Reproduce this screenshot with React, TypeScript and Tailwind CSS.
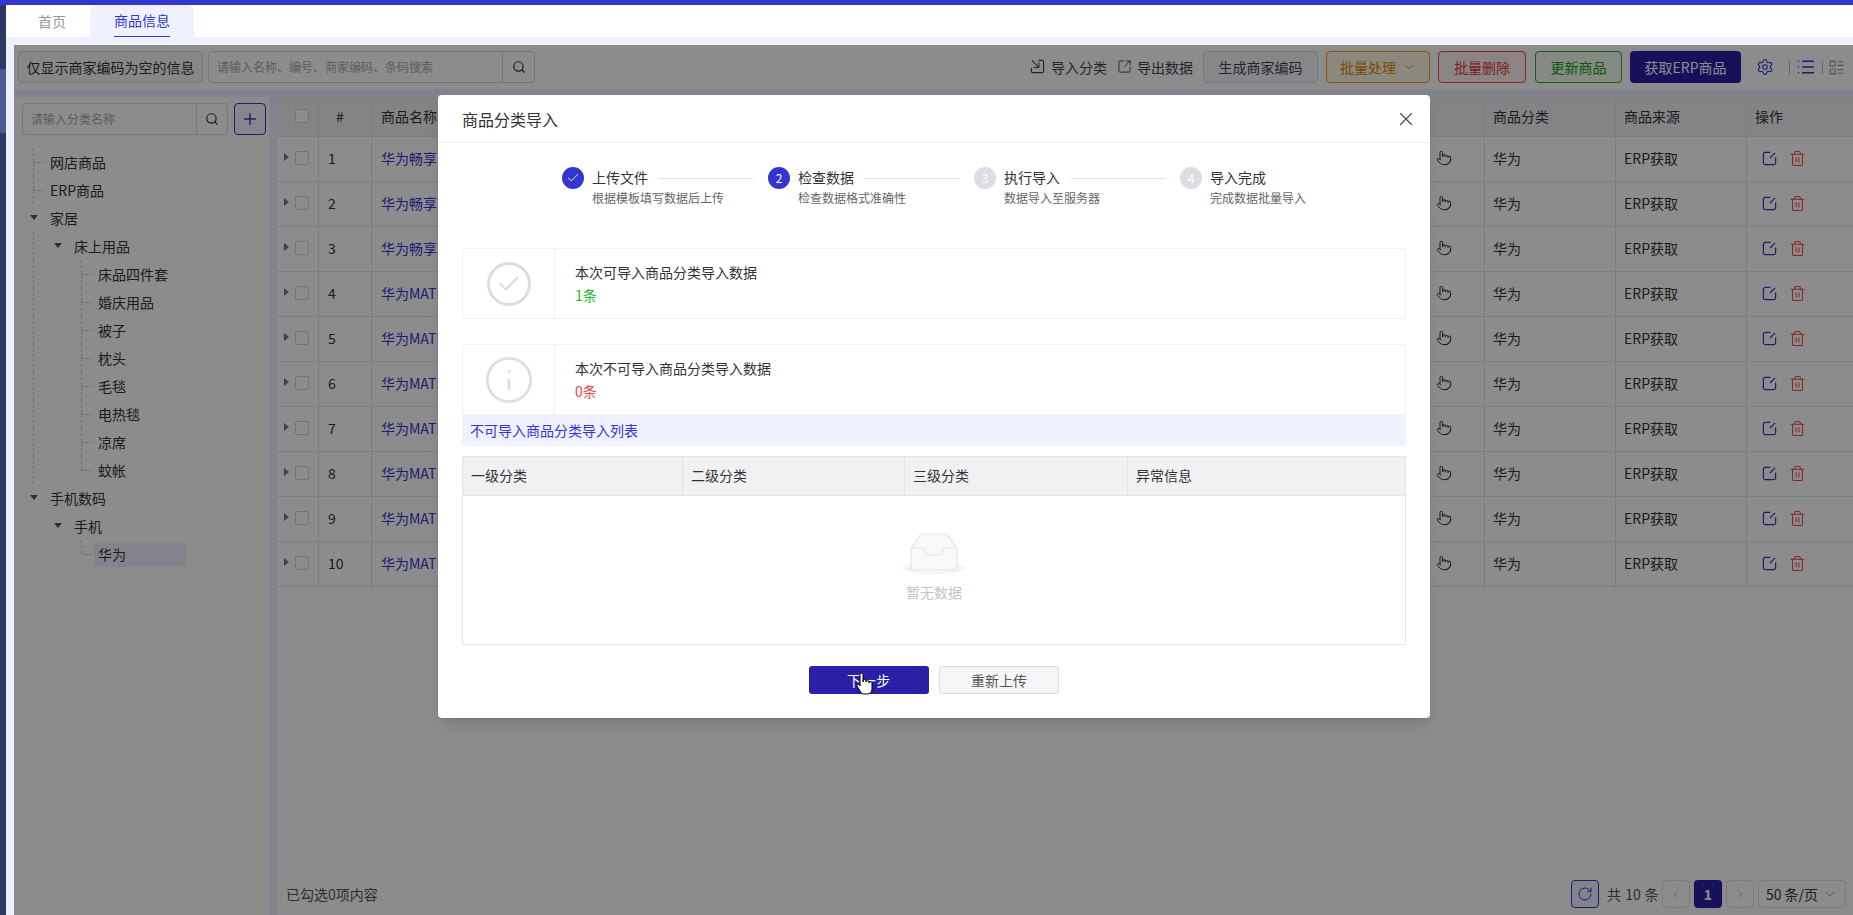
import { Check, ChevronDown, ChevronLeft, ChevronRight, Info, List, LayoutList, Plus, Pointer, RotateCw, Search, Settings, SquareArrowOutUpRight, Trash2, X } from "lucide-react";

const font = { fontFamily: '"Noto Sans CJK SC", "Noto Sans", sans-serif' };

const tree = [
  { label: "网店商品", level: 0, line: "first" },
  { label: "ERP商品", level: 0, line: "first" },
  { label: "家居", level: 0, caret: true },
  { label: "床上用品", level: 1, caret: true },
  { label: "床品四件套", level: 2 },
  { label: "婚庆用品", level: 2 },
  { label: "被子", level: 2 },
  { label: "枕头", level: 2 },
  { label: "毛毯", level: 2 },
  { label: "电热毯", level: 2 },
  { label: "凉席", level: 2 },
  { label: "蚊帐", level: 2, last: true },
  { label: "手机数码", level: 0, caret: true },
  { label: "手机", level: 1, caret: true },
  { label: "华为", level: 2, last: true, active: true },
];

const rows = [
  "华为畅享10 Plus 全网通",
  "华为畅享20 Pro 全网通",
  "华为畅享20 SE 全网通",
  "华为MATE 30 Pro 5G",
  "华为MATE 40 Pro 5G",
  "华为MATE 40 RS 5G",
  "华为MATE 20 X 5G",
  "华为MATE 30 RS 5G",
  "华为MATE 40E 5G",
  "华为MATE X2 5G",
];

const tableCols = "grid grid-cols-[42px_53px_1fr_55px_131px_131px_106px]";
const cell = "border-r border-b border-[#e4e5e8] flex items-center pb-[2px]";

function Checkbox() {
  return <span className="w-[14px] h-[14px] rounded-[2px] border border-[#d5d6da] bg-white" />;
}

function TreeRow({ item }: { item: (typeof tree)[number] }) {
  const textLeft = item.level === 0 ? "pl-[36px]" : item.level === 1 ? "pl-[60px]" : "pl-[84px]";
  return (
    <div className={`relative h-[28px] flex items-center text-sm text-[#333] ${textLeft}`}>
      {item.caret && (
        <span
          className={`absolute top-[11px] w-0 h-0 border-x-[4px] border-x-transparent border-t-[5px] border-t-[#555] ${
            item.level === 0 ? "left-[16px]" : "left-[40px]"
          }`}
        />
      )}
      {item.line === "first" && (
        <>
          <span className="absolute left-[19px] top-0 h-[28px] border-l border-dashed border-[#d0d0d0]" />
          <span className="absolute left-[19px] top-[14px] w-[11px] border-t border-dashed border-[#d0d0d0]" />
        </>
      )}
      {item.level >= 1 && item.label !== "手机" && item.label !== "华为" && (
        <span className="absolute left-[19px] top-0 h-[28px] border-l border-dashed border-[#d0d0d0]" />
      )}
      {item.level === 2 && (
        <>
          <span className={`absolute left-[67px] top-0 border-l border-dashed border-[#d0d0d0] ${item.last ? "h-[14px]" : "h-[28px]"}`} />
          <span className="absolute left-[67px] top-[14px] w-[11px] border-t border-dashed border-[#d0d0d0]" />
        </>
      )}
      {item.active && <span className="absolute left-[80px] top-[3px] w-[92px] h-[24px] rounded-[2px] bg-[#eff1fe]" />}
      <span className="relative pb-[1px]">{item.label}</span>
    </div>
  );
}

function Step({ n, title, sub, state, last }: { n: number; title: string; sub: string; state: "done" | "active" | "todo"; last?: boolean }) {
  return (
    <div className="w-[206px] flex gap-[8px] shrink-0">
      <span
        className={`w-[22px] h-[22px] shrink-0 rounded-full flex items-center justify-center text-xs text-white ${
          state === "todo" ? "bg-[#dcdde3]" : "bg-[#3535d0]"
        }`}
      >
        {state === "done" ? <Check size={14} strokeWidth={1.5} /> : n}
      </span>
      <div className="flex-1 min-w-0">
        <div className="flex items-center h-[22px] gap-[10px]">
          <span className="text-sm text-[#333] whitespace-nowrap pb-[2px]">{title}</span>
          {!last && <span className="w-[96px] border-t border-[#e4e5e8]" />}
        </div>
        <div className="text-xs leading-[16px] mt-[1px] text-[#666] whitespace-nowrap">{sub}</div>
      </div>
    </div>
  );
}

function ResultCard({ icon, title, value, valueColor }: { icon: React.ReactNode; title: string; value: string; valueColor: string }) {
  return (
    <div className="h-[71px] border border-[#f1f1f4] rounded-[2px] flex">
      <div className="w-[92px] border-r border-[#f1f1f4] flex items-center justify-center text-[#dcdde3]">{icon}</div>
      <div className="pl-[20px] pb-[1px] flex flex-col justify-center gap-[3px] text-sm leading-[20px]">
        <div className="text-[#333]">{title}</div>
        <div className={valueColor}>{value}</div>
      </div>
    </div>
  );
}

function Modal() {
  return (
    <div className="absolute left-[424px] top-[50px] w-[992px] h-[623px] bg-white rounded-[4px] shadow-lg flex flex-col">
      <div className="h-[48px] shrink-0 border-b border-[#eeeef0] flex items-center justify-between pl-[24px] pr-[13px]">
        <span className="text-base text-[#333]">商品分类导入</span>
        <X size={22} strokeWidth={1.25} className="text-[#444]" />
      </div>
      <div className="flex pl-[124px] pt-[24px] h-[105px] shrink-0">
        <Step n={1} state="done" title="上传文件" sub="根据模板填写数据后上传" />
        <Step n={2} state="active" title="检查数据" sub="检查数据格式准确性" />
        <Step n={3} state="todo" title="执行导入" sub="数据导入至服务器" />
        <Step n={4} state="todo" last title="导入完成" sub="完成数据批量导入" />
      </div>
      <div className="px-[24px] flex flex-col">
        <ResultCard
          icon={
            <span className="w-[44px] h-[44px] rounded-full border-[3px] border-[#dcdde3] flex items-center justify-center">
              <Check size={26} strokeWidth={2} />
            </span>
          }
          title="本次可导入商品分类导入数据"
          value="1条"
          valueColor="text-[#1fb41f]"
        />
        <div className="h-[25px]" />
        <ResultCard icon={<Info size={52} strokeWidth={1.25} />} title="本次不可导入商品分类导入数据" value="0条" valueColor="text-[#f5403c]" />
        <div className="h-[31px] bg-[#eff1fe] text-sm text-[#3535d0] flex items-center pl-[8px] pb-[2px]">不可导入商品分类导入列表</div>
        <div className="mt-[10px] border border-[#e6e6ea] h-[189px] flex flex-col">
          <div className="h-[39px] shrink-0 bg-[#f1f1f4] border-b border-[#e6e6ea] grid grid-cols-[220px_222px_223px_1fr] text-sm text-[#333]">
            {["一级分类", "二级分类", "三级分类", "异常信息"].map((h, i) => (
              <div key={h} className={`flex items-center pl-[8px] pb-[2px] ${i < 3 ? "border-r border-[#e6e6ea]" : ""}`}>
                {h}
              </div>
            ))}
          </div>
          <div className="flex-1 flex flex-col items-center pt-[37px]">
            <svg width="64" height="42" viewBox="0 0 64 42" fill="none">
              <ellipse cx="32" cy="35" rx="31" ry="6.5" fill="#f5f5f5" />
              <path d="M9 15 L19 1 H45 L55 15 V34 Q55 37 52 37 H12 Q9 37 9 34 Z" fill="#f8f8f8" stroke="#e6e6e6" strokeWidth="1.2" />
              <path d="M9 15 H22 Q23 22 27 22 H37 Q41 22 42 15 H55" fill="none" stroke="#e6e6e6" strokeWidth="1.2" />
            </svg>
            <span className="text-sm text-[#c4c4c4] mt-[7px]">暂无数据</span>
          </div>
        </div>
      </div>
      <div className="flex justify-center gap-[10px] mt-[21px]">
        <div className="relative w-[120px] h-[28px] rounded-[3px] bg-[#2a20a8] text-white text-sm flex items-center justify-center tracking-[0.05em] pb-[1px]">
          下一步
          {/* mouse cursor caught in the shot */}
          <svg width="18" height="24" viewBox="0 0 18 24" className="absolute left-[47px] top-[6px]">
            <path
              d="M4 2.5a1.5 1.5 0 0 1 3 0V10V9a1.5 1.5 0 0 1 3 0v1a1.5 1.5 0 0 1 3 0v1a1.5 1.5 0 0 1 3 0v6c0 3-2 5-5 5H8c-2 0-3-1-4-3L1 14c-.8-1.4 1-2.8 2-1.5l1 1.5Z"
              fill="white"
              stroke="black"
              strokeWidth="1"
            />
          </svg>
        </div>
        <div className="w-[120px] h-[28px] rounded-[3px] bg-[#f6f6f9] border border-[#dcdde3] text-sm text-[#555] flex items-center justify-center pb-[1px]">重新上传</div>
      </div>
    </div>
  );
}

export default function App() {
  return (
    <div className="h-screen overflow-hidden flex flex-col bg-white" style={font}>
      <div className="h-[5px] shrink-0 bg-[#3535d0]" />
      <div className="flex-1 flex min-h-0">
        {/* Left nav strip */}
        <div className="w-[6px] shrink-0 bg-[#2f3763] flex flex-col pt-[64px]">
          <div className="h-[64px] bg-[#4d5a94]" />
        </div>

        <div className="flex-1 min-w-0 flex flex-col">
          {/* Tabs */}
          <div className="h-[32px] shrink-0 flex items-stretch text-sm">
            <div className="w-[84px] pl-[32px] flex items-center text-[#999]">首页</div>
            <div className="w-[104px] rounded-t-[8px] bg-[#eff1fe] flex justify-center">
              <span className="h-[32px] leading-[30px] border-b border-[#3535d0] text-[#3535d0]">商品信息</span>
            </div>
          </div>

          <div className="flex-1 min-h-0 bg-[#eff1fe] pl-[8px] pt-[8px] flex">
            <div className="relative flex-1 min-w-0 flex flex-col">
              {/* Toolbar */}
              <div className="h-[44px] shrink-0 bg-white flex items-center pl-[4px] pr-[8px] text-sm">
                <div className="h-[32px] w-[185px] border border-[#d8d9dd] rounded-[4px] bg-[#f6f6f9] text-[#333] flex items-center justify-center pb-[1px]">仅显示商家编码为空的信息</div>
                <div className="ml-[5px] h-[32px] w-[327px] border border-[#d8d9dd] rounded-[4px] flex items-center">
                  <span className="flex-1 pl-[8px] text-xs text-[#aaa]">请输入名称、编号、商家编码、条码搜索</span>
                  <span className="w-[32px] h-full border-l border-[#d8d9dd] flex items-center justify-center text-[#333]">
                    <Search size={14} strokeWidth={2} />
                  </span>
                </div>
                <div className="flex-1" />
                <span className="flex items-center gap-[6px] text-[#445] pb-[1px]">
                  <svg width="15" height="15" viewBox="0 0 16 16" fill="none" stroke="currentColor" strokeWidth="1.2">
                    <path d="M9 1.5h4a1.5 1.5 0 0 1 1.5 1.5v10a1.5 1.5 0 0 1-1.5 1.5H3A1.5 1.5 0 0 1 1.5 13v-3.5" />
                    <path d="M2 1.5l7 7M9.5 3.5v5.5H4" />
                  </svg>
                  导入分类
                </span>
                <span className="ml-[10px] flex items-center gap-[5px] text-[#445] pb-[1px]">
                  <SquareArrowOutUpRight size={15} strokeWidth={1.5} />
                  导出数据
                </span>
                <div className="ml-[10px] w-[115px] h-[32px] border border-[#d8d9dd] rounded-[4px] bg-[#f6f6f9] text-[#445] flex items-center justify-center pb-[1px]">生成商家编码</div>
                <div className="ml-[8px] w-[104px] h-[32px] border border-[#f59e0b] rounded-[4px] bg-[#fff7e6] text-[#e58a00] flex items-center justify-center gap-[6px] pb-[1px]">
                  批量处理 <ChevronDown size={14} strokeWidth={1.5} />
                </div>
                <div className="ml-[8px] w-[88px] h-[32px] border border-[#f04848] rounded-[4px] bg-[#fff1f0] text-[#e83838] flex items-center justify-center pb-[1px]">批量删除</div>
                <div className="ml-[9px] w-[87px] h-[32px] border border-[#22b022] rounded-[4px] bg-[#f0fbef] text-[#16a016] flex items-center justify-center pb-[1px]">更新商品</div>
                <div className="ml-[8px] w-[111px] h-[32px] rounded-[4px] bg-[#2a20a8] text-white flex items-center justify-center pb-[1px]">获取ERP商品</div>
                <Settings size={18} strokeWidth={1.5} className="ml-[15px] text-[#3535d0]" />
                <span className="ml-[15px] h-[13px] border-l border-[#bbb]" />
                <List size={20} strokeWidth={1.75} className="ml-[6px] text-[#3535d0]" />
                <span className="ml-[6px] h-[13px] border-l border-[#bbb]" />
                <LayoutList size={17} strokeWidth={1.5} className="ml-[5px] text-[#999]" />
              </div>

              {/* Body */}
              <div className="flex-1 min-h-0 mt-[8px] flex gap-[8px]">
                <div className="w-[255px] shrink-0 bg-white">
                  <div className="flex gap-[6px] pl-[8px] pt-[6px]">
                    <div className="w-[206px] h-[32px] border border-[#d8d9dd] rounded-[4px] flex items-center">
                      <span className="flex-1 pl-[8px] text-xs text-[#aaa]">请输入分类名称</span>
                      <span className="w-[31px] h-full border-l border-[#d8d9dd] flex items-center justify-center text-[#333]">
                        <Search size={14} strokeWidth={2} />
                      </span>
                    </div>
                    <div className="w-[32px] h-[32px] border border-[#3535d0] rounded-[4px] bg-[#f6f6fe] flex items-center justify-center text-[#3535d0]">
                      <Plus size={18} strokeWidth={2} />
                    </div>
                  </div>
                  <div className="mt-[13px]">
                    {tree.map((t) => (
                      <TreeRow key={t.label} item={t} />
                    ))}
                  </div>
                </div>

                <div className="flex-1 min-w-0 bg-white flex flex-col">
                  <div className={`${tableCols} text-sm text-[#333]`}>
                    <div className={`${cell} bg-[#f1f1f4] h-[40px] border-t pl-[18px]`}><Checkbox /></div>
                    <div className={`${cell} bg-[#f1f1f4] h-[40px] border-t pl-[17px]`}>#</div>
                    <div className={`${cell} bg-[#f1f1f4] h-[40px] border-t pl-[9px]`}>商品名称</div>
                    <div className={`${cell} bg-[#f1f1f4] h-[40px] border-t`} />
                    <div className={`${cell} bg-[#f1f1f4] h-[40px] border-t pl-[8px]`}>商品分类</div>
                    <div className={`${cell} bg-[#f1f1f4] h-[40px] border-t pl-[8px]`}>商品来源</div>
                    <div className={`${cell} bg-[#f1f1f4] h-[40px] border-t pl-[8px] border-r-0`}>操作</div>
                    {rows.map((name, i) => (
                      <div key={i} className="contents">
                        <div className={`${cell} h-[45px] relative pl-[18px]`}>
                          <span className="absolute left-[7px] top-[16px] w-0 h-0 border-y-[4px] border-y-transparent border-l-[5px] border-l-[#777]" />
                          <Checkbox />
                        </div>
                        <div className={`${cell} h-[45px] pl-[9px]`}>{i + 1}</div>
                        <div className={`${cell} h-[45px] pl-[9px] text-[#3535d0] whitespace-nowrap overflow-hidden`}>{name}</div>
                        <div className={`${cell} h-[45px] pl-[6px]`}>
                          <Pointer size={16} strokeWidth={1.5} />
                        </div>
                        <div className={`${cell} h-[45px] pl-[8px]`}>华为</div>
                        <div className={`${cell} h-[45px] pl-[8px]`}>ERP获取</div>
                        <div className={`${cell} h-[45px] pl-[15px] gap-[12px] border-r-0`}>
                          <svg width="15" height="15" viewBox="0 0 16 16" fill="none" stroke="currentColor" strokeWidth="1.3" className="text-[#3535d0]">
                            <path d="M9 1.5H3.5a2 2 0 0 0-2 2v9a2 2 0 0 0 2 2h9a2 2 0 0 0 2-2V7" />
                            <path d="M14 2 8.5 7.5" />
                          </svg>
                          <Trash2 size={17} strokeWidth={1.5} className="text-[#f04848]" />
                        </div>
                      </div>
                    ))}
                  </div>
                  <div className="flex-1" />
                  <div className="h-[34px] mb-[4px] flex items-center pl-[9px] pr-[7px] text-sm text-[#555]">
                    <span>已勾选0项内容</span>
                    <div className="flex-1" />
                    <span className="w-[28px] h-[28px] border border-[#3535d0] rounded-[4px] bg-[#eff1fe] flex items-center justify-center text-[#3535d0]">
                      <RotateCw size={16} strokeWidth={1.5} />
                    </span>
                    <span className="ml-[8px] w-[51px] whitespace-nowrap [word-spacing:1px]">共 10 条</span>
                    <span className="ml-[4px] w-[28px] h-[28px] border border-[#e4e5e8] rounded-[4px] flex items-center justify-center text-[#bbb]">
                      <ChevronLeft size={16} strokeWidth={1.25} />
                    </span>
                    <span className="ml-[4px] w-[28px] h-[28px] rounded-[4px] bg-[#2a20a8] text-white font-bold flex items-center justify-center">1</span>
                    <span className="ml-[4px] w-[28px] h-[28px] border border-[#e4e5e8] rounded-[4px] flex items-center justify-center text-[#bbb]">
                      <ChevronRight size={16} strokeWidth={1.25} />
                    </span>
                    <span className="ml-[4px] w-[88px] h-[28px] border border-[#e4e5e8] rounded-[4px] flex items-center justify-center gap-[4px] text-[#333]">
                      50 条/页 <ChevronDown size={16} strokeWidth={1.25} className="text-[#999]" />
                    </span>
                  </div>
                </div>
              </div>

              {/* Dim layer + dialog */}
              <div className="absolute inset-0 bg-black/45" />
              <Modal />
            </div>
          </div>
        </div>
      </div>
    </div>
  );
}
